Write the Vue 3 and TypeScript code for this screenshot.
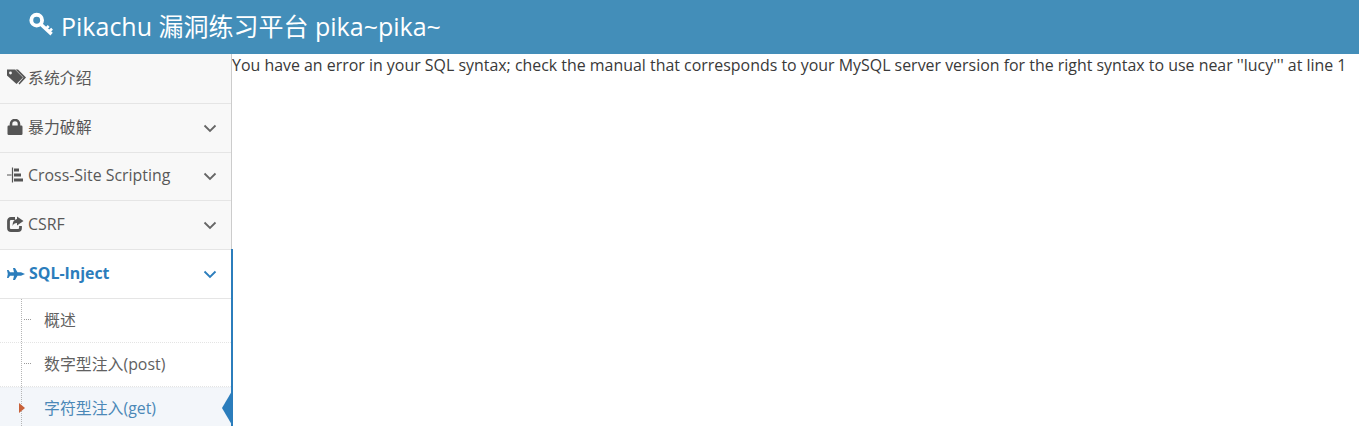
<template>
  <div class="page">
    <header class="navbar">
      <svg class="key-icon" viewBox="0 0 26 26" width="25" height="25">
        <circle cx="8" cy="8.5" r="5.6" fill="none" stroke="#fff" stroke-width="4" />
        <path d="M12 12.5 L23.5 23" stroke="#fff" stroke-width="3.6" fill="none" />
        <path d="M17.5 17.5 L20.5 14.5 M20.5 20.5 L24 17.5" stroke="#fff" stroke-width="2.8" fill="none" />
      </svg>
      <span class="brand">Pikachu 漏洞练习平台 pika~pika~</span>
    </header>

    <div class="body-row">
      <aside class="sidebar">
        <div
          v-for="item in menu"
          :key="item.name"
          class="menu-item"
          :class="{ open: item.open }"
          :style="{ height: item.height + 'px' }"
        >
          <span class="menu-icon" v-html="item.icon"></span>
          <span class="menu-text">{{ item.name }}</span>
          <svg v-if="item.arrow" class="chevron" viewBox="0 0 14 9" width="14" height="9">
            <path d="M1.5 1.5 L7 7 L12.5 1.5" fill="none" stroke="currentColor" stroke-width="1.8" />
          </svg>
        </div>

        <ul class="submenu">
          <li
            v-for="sub in subItems"
            :key="sub.name"
            class="sub-item"
            :class="{ active: sub.active }"
          >
            <span class="tick"></span>
            <span class="caret" v-if="sub.active"></span>
            {{ sub.name }}
            <span class="pointer" v-if="sub.active"></span>
          </li>
        </ul>
      </aside>

      <main class="content">
        <p class="message">You have an error in your SQL syntax; check the manual that corresponds to your MySQL server version for the right syntax to use near ''lucy''' at line 1</p>
      </main>
    </div>
  </div>
</template>

<script setup lang="ts">
interface MenuItem {
  name: string
  icon: string
  arrow: boolean
  open?: boolean
  height: number
}

interface SubItem {
  name: string
  active?: boolean
}

const tagIcon = '<svg viewBox="0 0 20 16" width="20" height="16"><path d="M0 0.5 H8 L16 8.5 L9.5 15 L0 6.5 Z" fill="#555"/><path d="M11 0.5 L19 8.5 L12.5 15.5 L11.5 14.5 L16.5 8.5 L8.5 0.5 Z" fill="#555"/><circle cx="3.5" cy="4" r="1.4" fill="#f8f8f8"/></svg>'
const lockIcon = '<svg viewBox="0 0 16 16" width="16" height="16"><path d="M4 7 V5 a4 4 0 0 1 8 0 V7" fill="none" stroke="#555" stroke-width="2.6"/><rect x="0.5" y="6.5" width="15" height="9.5" rx="1.2" fill="#555"/></svg>'
const indentIcon = '<svg viewBox="1 0 18 16" width="18" height="16"><path d="M1 8 H5.5 M6.5 0.5 V15.5" stroke="#555" stroke-width="1.2" fill="none"/><path d="M8 1.5 H13 V4.5 H8 Z M8 6.5 H15 V9.5 H8 Z M8 11.5 H17 V14.5 H8 Z" fill="#555"/></svg>'
const shareIcon = '<svg viewBox="0 0 17 16" width="17" height="16"><path d="M8 2.5 H4 Q1.5 2.5 1.5 5 V12 Q1.5 14.5 4 14.5 H11 Q13.5 14.5 13.5 12 V10" fill="none" stroke="#555" stroke-width="2.8"/><path d="M10 0.5 L16.5 5 L10 9.5 V7 Q6.5 7 5.5 10 Q5.5 3.5 10 3 Z" fill="#555"/></svg>'
const jetIcon = '<svg viewBox="0 0 18 14" width="18" height="14"><path d="M0 3 H1.5 L3 5.2 H7 L6 1 H8 L10.5 5.2 H14 L18 7 L14 8.8 H10.5 L8 13 H6 L7 8.8 H3 L1.5 11 H0 L0.8 7 Z" fill="#2b7dbc"/></svg>'

const menu: MenuItem[] = [
  { name: '系统介绍', icon: tagIcon, arrow: false, height: 50 },
  { name: '暴力破解', icon: lockIcon, arrow: true, height: 49 },
  { name: 'Cross-Site Scripting', icon: indentIcon, arrow: true, height: 48 },
  { name: 'CSRF', icon: shareIcon, arrow: true, height: 49 },
  { name: 'SQL-Inject', icon: jetIcon, arrow: true, open: true, height: 49 }
]

const subItems: SubItem[] = [
  { name: '概述' },
  { name: '数字型注入(post)' },
  { name: '字符型注入(get)', active: true }
]
</script>

<style scoped>
.page {
  height: 426px;
  overflow: hidden;
  font-family: "Open Sans", "Noto Sans CJK SC", sans-serif;
  color: #393939;
  background: #fff;
}

.navbar {
  height: 54px;
  background: #438eb9;
  display: flex;
  align-items: center;
  padding: 0 0 5px 29px;
  box-sizing: border-box;
  gap: 7px;
  color: #fff;
}

.key-icon {
  flex: none;
}

.brand {
  font-size: 25px;
}

.body-row {
  display: flex;
}

.sidebar {
  width: 232px;
  flex: none;
  height: 372px;
  box-sizing: border-box;
  border-right: 1px solid #ccc;
  position: relative;
}

.menu-item {
  box-sizing: border-box;
  display: flex;
  align-items: center;
  padding: 0 14px 0 7px;
  background: #f8f8f8;
  border-bottom: 1px solid #e5e5e5;
  color: #585858;
  font-size: 15.9px;
}

.menu-item.open {
  background: #fff;
  color: #2b7dbc;
  font-weight: 700;
}

.menu-item.open .menu-text {
  margin-left: 1px;
}

.menu-icon {
  width: 21px;
  flex: none;
  display: flex;
  align-items: center;
  padding-bottom: 3px;
}

.menu-item.open .menu-icon {
  padding-bottom: 0;
}

.menu-text {
  flex: 1;
  padding-bottom: 3px;
}

.chevron {
  flex: none;
  color: #666;
}

.open .chevron {
  color: #2b7dbc;
}

.submenu {
  list-style: none;
  margin: 0;
  padding: 0;
  position: relative;
}

.submenu::before {
  content: "";
  position: absolute;
  z-index: 1;
  left: 21px;
  top: 0;
  bottom: 0;
  border-left: 1px dotted #b5b5b5;
}

.sub-item {
  position: relative;
  box-sizing: border-box;
  height: 44px;
  padding: 0 0 2px 44px;
  display: flex;
  align-items: center;
  font-size: 15.9px;
  color: #616161;
  background: #fff;
  border-bottom: 1px dotted #e4e4e4;
}

.sub-item.active {
  height: 45px;
  padding-bottom: 6px;
  color: #4b88b7;
  background: #f3f6fa;
  border-bottom: none;
  border-top: 1px solid #eef1f5;
}

.tick {
  position: absolute;
  left: 24px;
  top: 20px;
  width: 7px;
  border-top: 1px dotted #9a9a9a;
}

.active .tick {
  display: none;
}

.caret {
  position: absolute;
  z-index: 2;
  left: 19px;
  top: 15px;
  border-left: 6px solid #c86139;
  border-top: 5px solid transparent;
  border-bottom: 5px solid transparent;
}

.pointer {
  position: absolute;
  right: -1px;
  top: 3px;
  width: 10px;
  height: 34px;
  background: #2b7dbc;
  clip-path: polygon(100% 0, 0 50%, 100% 100%);
}

.sidebar::after {
  content: "";
  position: absolute;
  right: -2px;
  top: 195px;
  bottom: 0;
  width: 2px;
  background: #2b7dbc;
}

.content {
  flex: 1;
  min-width: 0;
}

.message {
  margin: 0;
  font-size: 15.93px;
  line-height: 23px;
  white-space: nowrap;
}
</style>

<style>
html,
body {
  margin: 0;
  overflow: hidden;
}
</style>
